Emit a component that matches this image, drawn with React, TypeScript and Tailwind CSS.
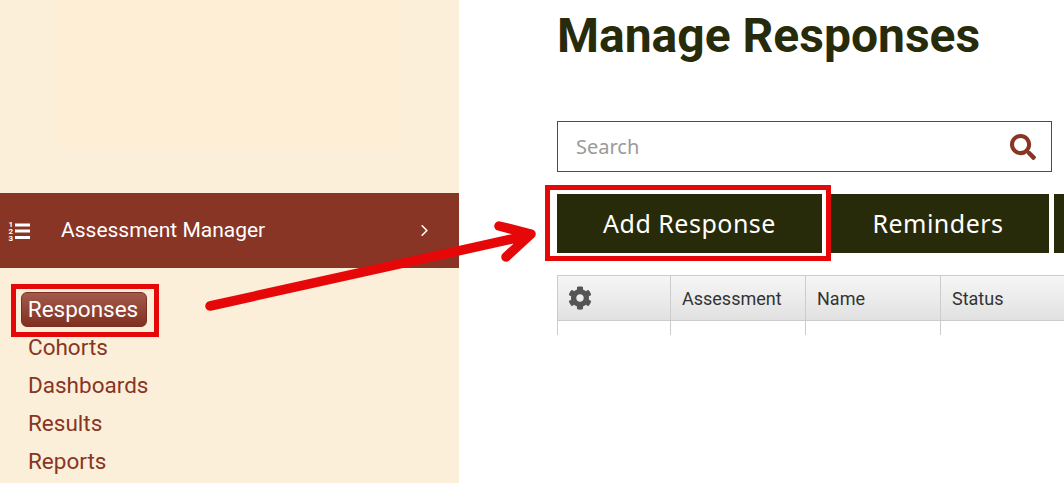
import React from "react";
import { FaCog, FaSearch } from "react-icons/fa";
import { ChevronRight } from "lucide-react";

const roboto = "font-['Roboto',sans-serif]";
const tech = "font-['Noto_Sans',sans-serif]";
const links = ["Cohorts", "Dashboards", "Results", "Reports"];
const cols = [
  { w: "w-[113px]", label: "" },
  { w: "w-[135px]", label: "Assessment" },
  { w: "w-[135px]", label: "Name" },
  { w: "flex-1", label: "Status" },
];

function ListIcon() {
  return (
    <svg width="22" height="22" viewBox="0 0 22 22" fill="white" className="shrink-0">
      <rect x="7" y="3.5" width="15" height="3" />
      <rect x="7" y="9.5" width="15" height="3" />
      <rect x="7" y="16" width="15" height="3" />
      <text x="0.5" y="7" fontSize="8" fontWeight="700" fontFamily="Roboto, sans-serif">1</text>
      <text x="0.5" y="14" fontSize="8" fontWeight="700" fontFamily="Roboto, sans-serif">2</text>
      <text x="0.5" y="21" fontSize="8" fontWeight="700" fontFamily="Roboto, sans-serif">3</text>
    </svg>
  );
}

export default function App() {
  return (
    <div className={`relative flex h-[483px] w-[1064px] overflow-hidden bg-white ${roboto}`}>
      <aside className="h-full w-[459px] shrink-0 bg-[#fbefd9]">
        <div className="flex h-[193px] justify-center">
          <div className="ml-[-7px] h-[148px] w-[342px] bg-[#feeed6]" />
        </div>
        <div className="flex h-[75px] items-center bg-[#883525] pl-[8px] pr-[25px] text-white">
          <ListIcon />
          <span className="ml-[31px] flex-1 text-[21px]">Assessment Manager</span>
          <ChevronRight className="h-[19px] w-[19px]" strokeWidth={2} />
        </div>
        <div className="pl-[21px] pt-[24px] text-[22.5px] leading-[38px] text-[#883525]">
          <div className="relative flex h-[35px] w-[126px] items-center justify-center rounded-[6px] border border-[#7a2f20] bg-gradient-to-b from-[#a25a4c] to-[#80301f] text-white">
            <span className="-translate-x-[1px] -translate-y-[1px]">Responses</span>
            <div className="absolute -left-[11px] -right-[13px] -top-[9px] -bottom-[11px] border-[5px] border-[#e60808]" />
          </div>
          <div className="pl-[7px] pt-[1px]">
            {links.map((l) => (
              <div key={l} className="h-[38px]">{l}</div>
            ))}
          </div>
        </div>
      </aside>

      <main className="min-w-0 flex-1 pl-[98px]">
        <h1 className="h-[121px] pt-[6px] text-[48px] font-bold leading-[60px] text-[#282b0a]">Manage Responses</h1>
        <div className="flex h-[51px] w-[495px] items-center justify-between border border-[#883525] pl-[18px] pr-[15px]">
          <span className={`text-[20px] text-[#9a9a9a] ${tech}`}>Search</span>
          <FaSearch className="h-[26px] w-[26px] text-[#883525]" />
        </div>
        <div className={`mt-[22px] flex w-[600px] gap-[5px] text-[25px] tracking-[0.5px] text-white ${tech}`}>
          <div className="relative flex h-[59px] w-[265px] items-center justify-center bg-[#282b0a]">
            <span>Add Response</span>
            <div className="absolute -left-[12px] -right-[9px] -top-[9px] -bottom-[8px] border-[5px] border-[#e60808]" />
          </div>
          <div className="flex h-[59px] w-[222px] items-center justify-center bg-[#282b0a]">
            <span>Reminders</span>
          </div>
          <div className="h-[59px] w-[100px] bg-[#282b0a]" />
        </div>
        <div className="mt-[22px] flex w-[520px] border-t border-[#cccccc]">
          {cols.map((c, i) => (
            <div key={i} className={`${c.w} h-[59px] border-l border-[#cccccc]`}>
              <div className="flex h-[45px] items-center border-b border-[#cccccc] bg-gradient-to-b from-[#f6f6f6] to-[#e1e1e1] pl-[11px] text-[18px] text-[#333333]">
                {i === 0 ? <FaCog className="-ml-[1px] h-[24px] w-[24px] text-[#555555]" /> : c.label}
              </div>
            </div>
          ))}
        </div>
      </main>

      <svg className="pointer-events-none absolute left-0 top-0" width="1064" height="483" viewBox="0 0 1064 483">
        <path d="M210 306 L530 235 M499 226 L531 234 L506 257" fill="none" stroke="#e60808" strokeWidth="9.5" strokeLinecap="round" strokeLinejoin="round" />
      </svg>
    </div>
  );
}
